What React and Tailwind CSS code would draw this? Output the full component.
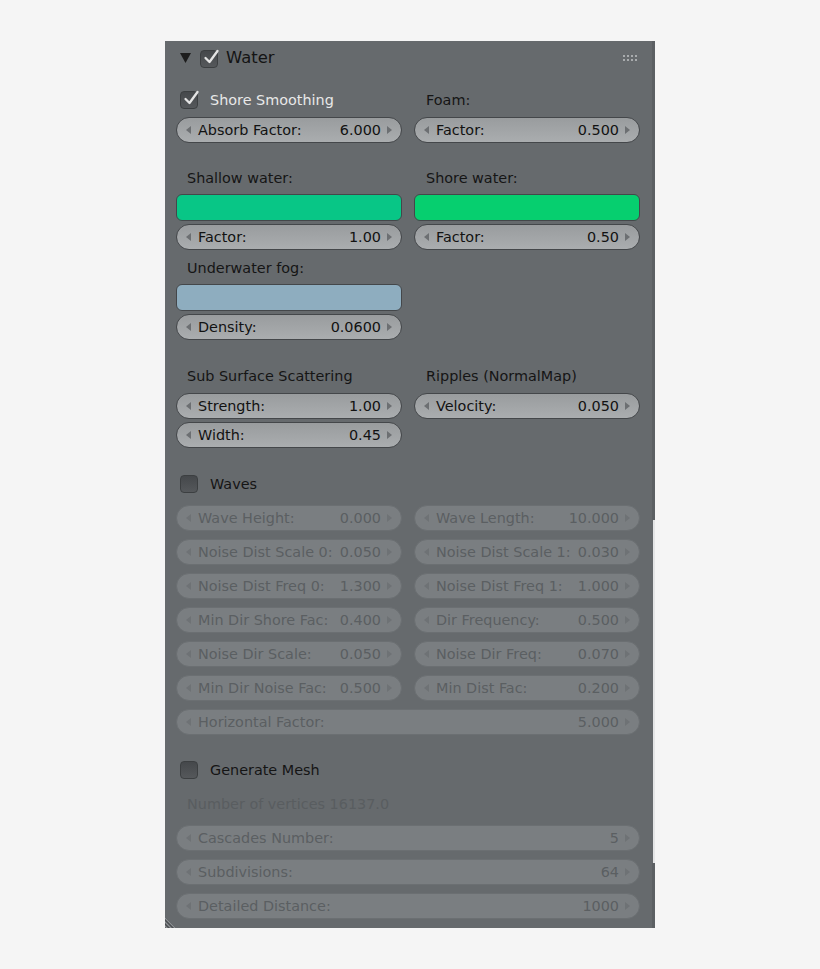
import React from "react";

const FONT = { fontFamily: '"DejaVu Sans", "Liberation Sans", sans-serif' };

function Check({ checked, className = "" }) {
  return (
    <div className={`relative w-[18px] h-[18px] rounded-[4px] border border-[#3c3f41] bg-gradient-to-b from-[#45484b] to-[#55585b] ${className}`}>
      {checked && (
        <svg className="absolute -top-[3px] left-[1px]" width="19" height="19" viewBox="0 0 19 19">
          <path d="M3.5 10 L7.5 14 L15.5 3" fill="none" stroke="#e4e4e4" strokeWidth="2.3" strokeLinecap="round" strokeLinejoin="round" />
        </svg>
      )}
    </div>
  );
}

function Arrow({ dir, color }) {
  return (
    <svg width="5" height="8" viewBox="0 0 5 8">
      {dir === "left" ? <polygon points="5,0 5,8 0,4" fill={color} /> : <polygon points="0,0 0,8 5,4" fill={color} />}
    </svg>
  );
}

function Num({ label, value, disabled, className = "" }) {
  const box = disabled
    ? "border-[#6b6f72] bg-[#7a7e81] text-[#5b5f62]"
    : "border-[#44474a] bg-gradient-to-b from-[#999c9e] to-[#aaadaf] text-[#121212]";
  const ac = disabled ? "#6e7275" : "#6c6f72";
  return (
    <div className={`h-[26px] min-w-0 flex items-center rounded-full border px-[9px] text-[14.4px] leading-none ${box} ${className}`}>
      <Arrow dir="left" color={ac} />
      <span className="ml-[7px] whitespace-nowrap">{label}</span>
      <span className="ml-auto mr-[6px] whitespace-nowrap">{value}</span>
      <Arrow dir="right" color={ac} />
    </div>
  );
}

function Swatch({ color }) {
  return <div className={`h-[27px] rounded-[6px] border border-[#44474a] ${color}`} />;
}

function Label({ children, className = "" }) {
  return <div className={`h-[26px] flex items-center text-[14.4px] leading-none text-[#151515] ${className}`}>{children}</div>;
}

function Row({ children, className = "" }) {
  return <div className={`grid grid-cols-2 gap-[12px] ${className}`}>{children}</div>;
}

const waves = [
  ["Wave Height:", "0.000", "Wave Length:", "10.000"],
  ["Noise Dist Scale 0:", "0.050", "Noise Dist Scale 1:", "0.030"],
  ["Noise Dist Freq 0:", "1.300", "Noise Dist Freq 1:", "1.000"],
  ["Min Dir Shore Fac:", "0.400", "Dir Frequency:", "0.500"],
  ["Noise Dir Scale:", "0.050", "Noise Dir Freq:", "0.070"],
  ["Min Dir Noise Fac:", "0.500", "Min Dist Fac:", "0.200"],
];

export default function App() {
  return (
    <div className="min-h-[969px] w-[820px] bg-[#f5f5f5] pt-[41px]" style={FONT}>
      <div className="relative ml-[165px] w-[490px] flex bg-[#666a6d]">
        {/* content */}
        <div className="flex-1 flex flex-col pl-[11px] pr-[12px] pt-[1px] pb-[9px]">
          {/* header */}
          <div className="h-[32px] flex items-center">
            <svg className="ml-[4px]" width="11" height="10" viewBox="0 0 11 10">
              <polygon points="0,0 11,0 5.5,10" fill="#1d1d1d" />
            </svg>
            <Check checked className="ml-[9px] mt-[2px]" />
            <span className="ml-[8px] text-[16.4px] leading-none text-[#141414]">Water</span>
            <svg className="ml-auto mr-[3px]" width="14" height="6" viewBox="0 0 14 6">
              {[0, 4, 8, 12].map((x) => (
                <React.Fragment key={x}>
                  <rect x={x} y="0" width="2" height="2" fill="#a9acae" />
                  <rect x={x} y="4" width="2" height="2" fill="#a9acae" />
                </React.Fragment>
              ))}
            </svg>
          </div>

          <Row className="mt-[13px]">
            <div className="h-[26px] flex items-center">
              <Check checked className="ml-[4px]" />
              <span className="ml-[12px] text-[14.4px] leading-none text-[#e8e8e8]">Shore Smoothing</span>
            </div>
            <Label className="pl-[12px]">Foam:</Label>
          </Row>
          <Row className="mt-[4px]">
            <Num label="Absorb Factor:" value="6.000" />
            <Num label="Factor:" value="0.500" />
          </Row>

          <Row className="mt-[22px]">
            <Label className="pl-[11px]">Shallow water:</Label>
            <Label className="pl-[12px]">Shore water:</Label>
          </Row>
          <Row className="mt-[3px]">
            <Swatch color="bg-[#08c686]" />
            <Swatch color="bg-[#06cf6f]" />
          </Row>
          <Row className="mt-[3px]">
            <Num label="Factor:" value="1.00" />
            <Num label="Factor:" value="0.50" />
          </Row>

          <Row className="mt-[5px]">
            <Label className="pl-[11px]">Underwater fog:</Label>
          </Row>
          <Row className="mt-[3px]">
            <Swatch color="bg-[#8eadbf]" />
          </Row>
          <Row className="mt-[3px]">
            <Num label="Density:" value="0.0600" />
          </Row>

          <Row className="mt-[23px]">
            <Label className="pl-[11px]">Sub Surface Scattering</Label>
            <Label className="pl-[12px]">Ripples (NormalMap)</Label>
          </Row>
          <Row className="mt-[4px]">
            <Num label="Strength:" value="1.00" />
            <Num label="Velocity:" value="0.050" />
          </Row>
          <Row className="mt-[3px]">
            <Num label="Width:" value="0.45" />
          </Row>

          <div className="mt-[23px] h-[26px] flex items-center">
            <Check className="ml-[4px]" />
            <span className="ml-[12px] text-[14.4px] leading-none text-[#151515]">Waves</span>
          </div>
          {waves.map(([a, av, b, bv]) => (
            <Row key={a} className="mt-[8px]">
              <Num disabled label={a} value={av} />
              <Num disabled label={b} value={bv} />
            </Row>
          ))}
          <Row className="mt-[8px]">
            <Num disabled label="Horizontal Factor:" value="5.000" className="col-span-2" />
          </Row>

          <div className="mt-[22px] h-[26px] flex items-center">
            <Check className="ml-[4px]" />
            <span className="ml-[12px] text-[14.4px] leading-none text-[#151515]">Generate Mesh</span>
          </div>
          <div className="mt-[8px] h-[26px] flex items-center pl-[11px] text-[14.4px] leading-none text-[#595d60]">
            Number of vertices 16137.0
          </div>
          <Row className="mt-[8px]">
            <Num disabled label="Cascades Number:" value="5" className="col-span-2" />
          </Row>
          <Row className="mt-[8px]">
            <Num disabled label="Subdivisions:" value="64" className="col-span-2" />
          </Row>
          <Row className="mt-[8px]">
            <Num disabled label="Detailed Distance:" value="1000" className="col-span-2" />
          </Row>
        </div>

        {/* scroll strip */}
        <div className="w-[3px] flex flex-col">
          <div className="h-[479px] bg-[#5c6063]" />
          <div className="h-[343px] flex">
            <div className="w-[1px] bg-[#666a6d]" />
            <div className="flex-1 bg-[#e4e5e6]" />
          </div>
          <div className="flex-1 bg-[#5c6063]" />
        </div>

        {/* resize corner */}
        <svg className="absolute left-0 bottom-0" width="14" height="14" viewBox="0 0 14 14">
          <path d="M0 4 L10 14 M0 8 L6 14 M0 12 L2 14" stroke="#8d9093" strokeWidth="1" />
          <path d="M0 6 L8 14 M0 10 L4 14" stroke="#4a4d50" strokeWidth="1" />
        </svg>
      </div>
    </div>
  );
}
